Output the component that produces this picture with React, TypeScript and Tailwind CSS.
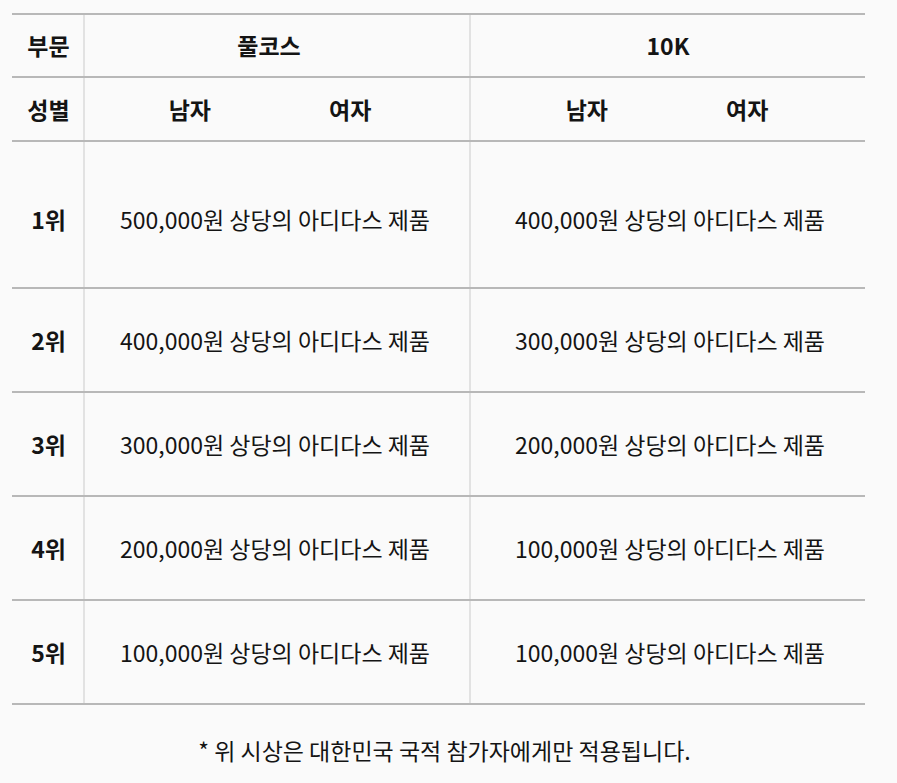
import React from "react";

const rows = [
  { rank: "1위", full: "500,000원 상당의 아디다스 제품", k10: "400,000원 상당의 아디다스 제품", h: "h-[147px]", pad: "pt-[9px]" },
  { rank: "2위", full: "400,000원 상당의 아디다스 제품", k10: "300,000원 상당의 아디다스 제품", h: "h-[104px]", pad: "" },
  { rank: "3위", full: "300,000원 상당의 아디다스 제품", k10: "200,000원 상당의 아디다스 제품", h: "h-[104px]", pad: "" },
  { rank: "4위", full: "200,000원 상당의 아디다스 제품", k10: "100,000원 상당의 아디다스 제품", h: "h-[104px]", pad: "" },
  { rank: "5위", full: "100,000원 상당의 아디다스 제품", k10: "100,000원 상당의 아디다스 제품", h: "h-[104px]", pad: "" },
];

export default function App() {
  return (
    <div
      className="w-[897px] h-[783px] bg-[#fafafa] text-[#141414] pt-[13px]"
      style={{ fontFamily: '"Noto Sans CJK KR", "Noto Sans", sans-serif' }}
    >
      <div className="ml-[12px] w-[853px] border-t-2 border-[#b8b8b8]">
        {/* header row 1 */}
        <div className="grid grid-cols-[73px_386px_394px] h-[63px] border-b-2 border-[#b8b8b8] font-bold text-[23px]">
          <div className="flex items-center justify-center border-r-2 border-[#e2e2e2] pl-[2px]">부문</div>
          <div className="flex items-center justify-center border-r-2 border-[#e2e2e2] pr-[16px]">풀코스</div>
          <div className="flex items-center justify-center">10K</div>
        </div>
        {/* header row 2 */}
        <div className="grid grid-cols-[73px_386px_394px] h-[64px] border-b-2 border-[#b8b8b8] font-bold text-[23px]">
          <div className="flex items-center justify-center border-r-2 border-[#e2e2e2] pl-[2px]">성별</div>
          <div className="flex items-center justify-center gap-[118px] border-r-2 border-[#e2e2e2] pr-[14px]">
            <span>남자</span>
            <span>여자</span>
          </div>
          <div className="flex items-center justify-center gap-[118px] pr-[2px]">
            <span>남자</span>
            <span>여자</span>
          </div>
        </div>
        {rows.map((r) => (
          <div
            key={r.rank}
            className={`grid grid-cols-[73px_386px_394px] border-b-2 border-[#b8b8b8] text-[23px] ${r.h}`}
          >
            <div className={`flex items-center justify-center border-r-2 border-[#e2e2e2] font-bold pl-[2px] ${r.pad}`}>{r.rank}</div>
            <div className={`flex items-center justify-center border-r-2 border-[#e2e2e2] pr-[4px] ${r.pad}`}>{r.full}</div>
            <div className={`flex items-center justify-center pl-[4px] ${r.pad}`}>{r.k10}</div>
          </div>
        ))}
      </div>
      <div className="mt-[28px] flex justify-center text-[23px]">
        <span className="ml-[-8px]">* 위 시상은 대한민국 국적 참가자에게만 적용됩니다.</span>
      </div>
    </div>
  );
}
